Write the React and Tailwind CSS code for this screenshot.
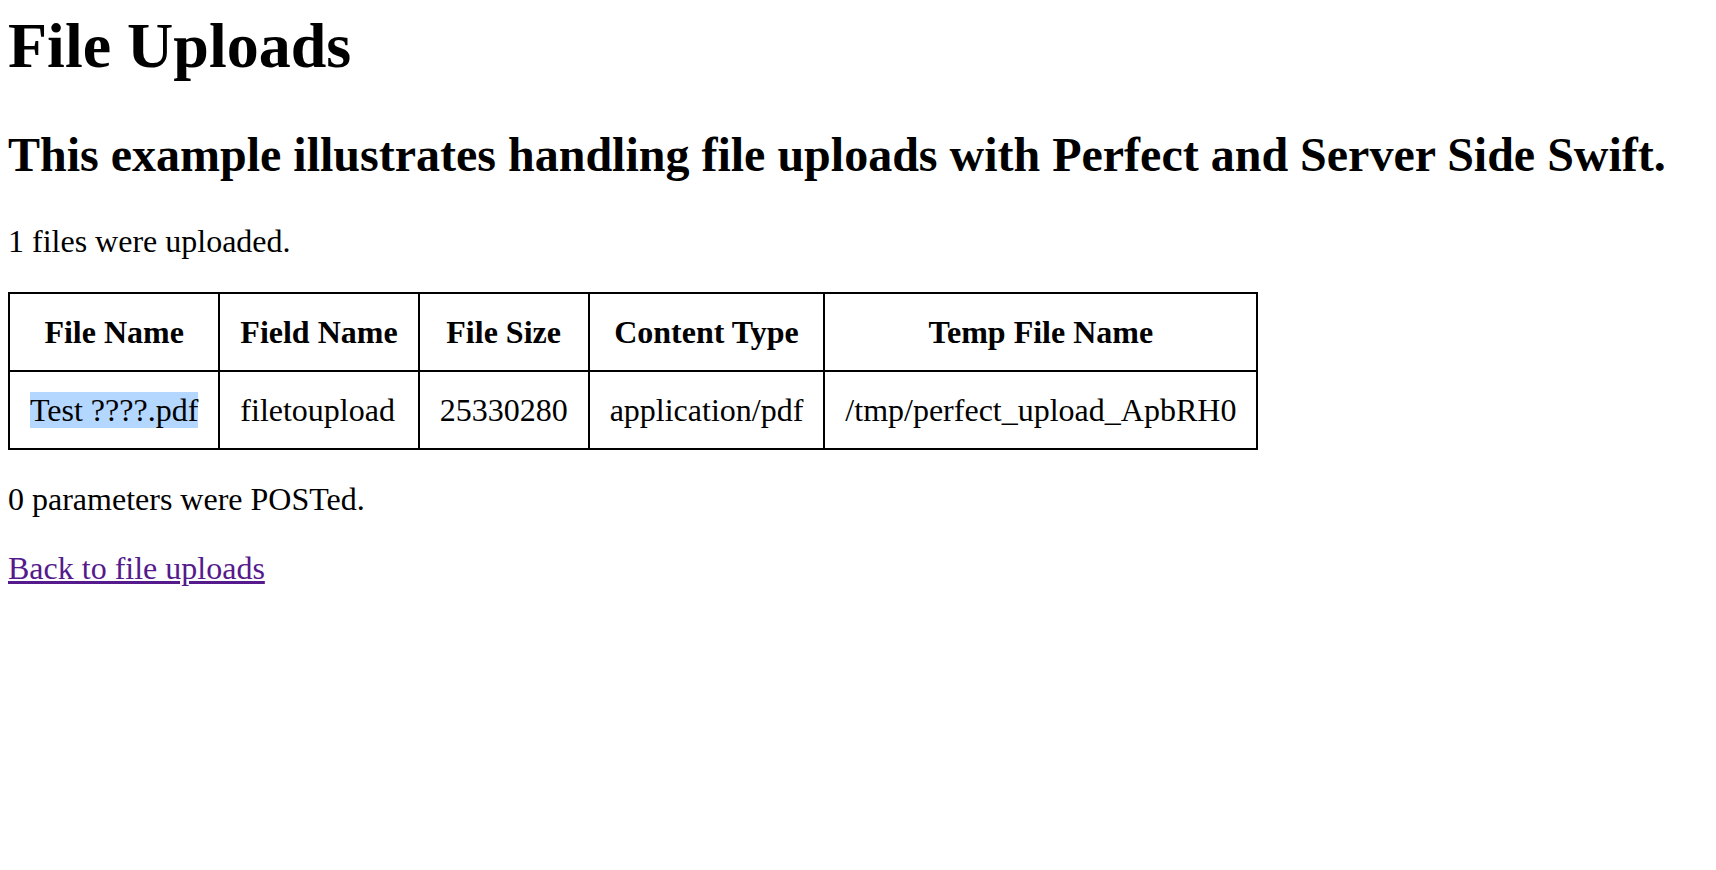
const files = [
  {
    name: 'Test ????.pdf',
    field: 'filetoupload',
    size: '25330280',
    type: 'application/pdf',
    temp: '/tmp/perfect_upload_ApbRH0',
  },
];

const headers = ['File Name', 'Field Name', 'File Size', 'Content Type', 'Temp File Name'];

export default function App() {
  return (
    <div className="min-h-screen bg-white px-2 pt-2 text-black font-['Liberation_Serif','Times_New_Roman',serif]">
      <h1 className="mb-[43px] text-[64px] font-bold leading-[76px]">File Uploads</h1>
      <h2 className="mb-[41px] text-[48px] font-bold leading-[56px]">
        This example illustrates handling file uploads with Perfect and Server Side Swift.
      </h2>
      <p className="mb-[33px] text-[32px] leading-[35px]">{files.length} files were uploaded.</p>

      <table className="mb-[32px] border-collapse border-2 border-black">
        <thead>
          <tr>
            {headers.map((h) => (
              <th
                key={h}
                className="border-2 border-black p-5 text-center text-[32px] font-bold leading-[36px]"
              >
                {h}
              </th>
            ))}
          </tr>
        </thead>
        <tbody>
          {files.map((f) => (
            <tr key={f.temp}>
              <td className="border-2 border-black p-5 text-left text-[32px] leading-[36px]">
                <span className="bg-[#b3d7ff]">{f.name}</span>
              </td>
              <td className="border-2 border-black p-5 text-left text-[32px] leading-[36px]">{f.field}</td>
              <td className="border-2 border-black p-5 text-left text-[32px] leading-[36px]">{f.size}</td>
              <td className="border-2 border-black p-5 text-left text-[32px] leading-[36px]">{f.type}</td>
              <td className="border-2 border-black p-5 text-left text-[32px] leading-[36px]">{f.temp}</td>
            </tr>
          ))}
        </tbody>
      </table>

      <p className="mb-[34px] text-[32px] leading-[35px]">0 parameters were POSTed.</p>
      <p className="text-[32px] leading-[35px]">
        <a href="#" className="text-[#551a8b] underline">
          Back to file uploads
        </a>
      </p>
    </div>
  );
}
